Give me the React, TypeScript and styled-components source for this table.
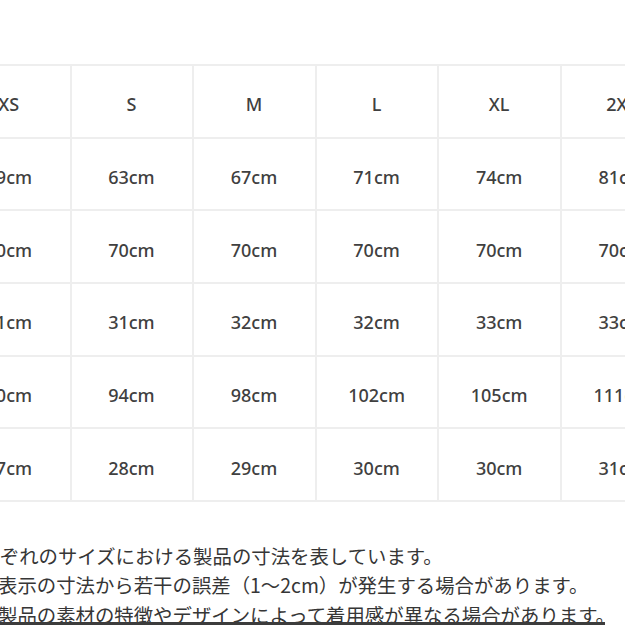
import React from "react";
import styled, { createGlobalStyle } from "styled-components";

const Global = createGlobalStyle`
  html, body {
    margin: 0;
    padding: 0;
    background: #ffffff;
    overflow: hidden;
  }
  body {
    width: 625px;
    height: 625px;
    position: relative;
  }
`;

const Page = styled.div`
  width: 625px;
  height: 625px;
  overflow: hidden;
  position: relative;
  background: #ffffff;
  padding-top: 64px;
  box-sizing: border-box;
`;

const Table = styled.div`
  display: grid;
  grid-template-columns: repeat(6, 122.6px);
  grid-auto-rows: 72.67px;
  margin-left: -52px;
  width: max-content;
  border-top: 2px solid #eeeeee;
`;

const Cell = styled.div<{ $head?: boolean }>`
  display: flex;
  align-items: center;
  justify-content: center;
  box-sizing: border-box;
  border-right: 2px solid #eeeeee;
  border-bottom: 2px solid #eeeeee;
  margin-right: -1px;
  font-family: "Noto Sans", "DejaVu Sans", sans-serif;
  font-size: 18px;
  font-weight: 500;
  color: #404040;
  padding-top: 6px;
`;

const Notes = styled.div`
  margin-top: 39px;
  margin-left: -2px;
  font-family: "Noto Sans CJK JP", "Noto Sans", sans-serif;
  font-size: 19.4px;
  line-height: 29.5px;
  color: #363636;
  white-space: nowrap;
`;

const Line = styled.div<{ $indent?: number }>`
  text-indent: ${(p) => p.$indent ?? 0}px;
`;

const BottomEdge = styled.div`
  position: absolute;
  left: 0;
  top: 622px;
  width: 605px;
  height: 3px;
  background: #3c3c3c;
`;

const rows: string[][] = [
  ["XS", "S", "M", "L", "XL", "2XL"],
  ["59cm", "63cm", "67cm", "71cm", "74cm", "81cm"],
  ["70cm", "70cm", "70cm", "70cm", "70cm", "70cm"],
  ["31cm", "31cm", "32cm", "32cm", "33cm", "33cm"],
  ["90cm", "94cm", "98cm", "102cm", "105cm", "111cm"],
  ["27cm", "28cm", "29cm", "30cm", "30cm", "31cm"],
];

export default function App() {
  return (
    <>
      <Global />
      <Page>
        <Table>
          {rows.map((row, r) =>
            row.map((v, c) => (
              <Cell key={`${r}-${c}`} $head={r === 0}>
                {v}
              </Cell>
            ))
          )}
        </Table>
        <Notes>
          <Line $indent={-37}>それぞれのサイズにおける製品の寸法を表しています。</Line>
          <Line>表示の寸法から若干の誤差（1～2cm）が発生する場合があります。</Line>
          <Line>製品の素材の特徴やデザインによって着用感が異なる場合があります。</Line>
        </Notes>
        <BottomEdge />
      </Page>
    </>
  );
}
